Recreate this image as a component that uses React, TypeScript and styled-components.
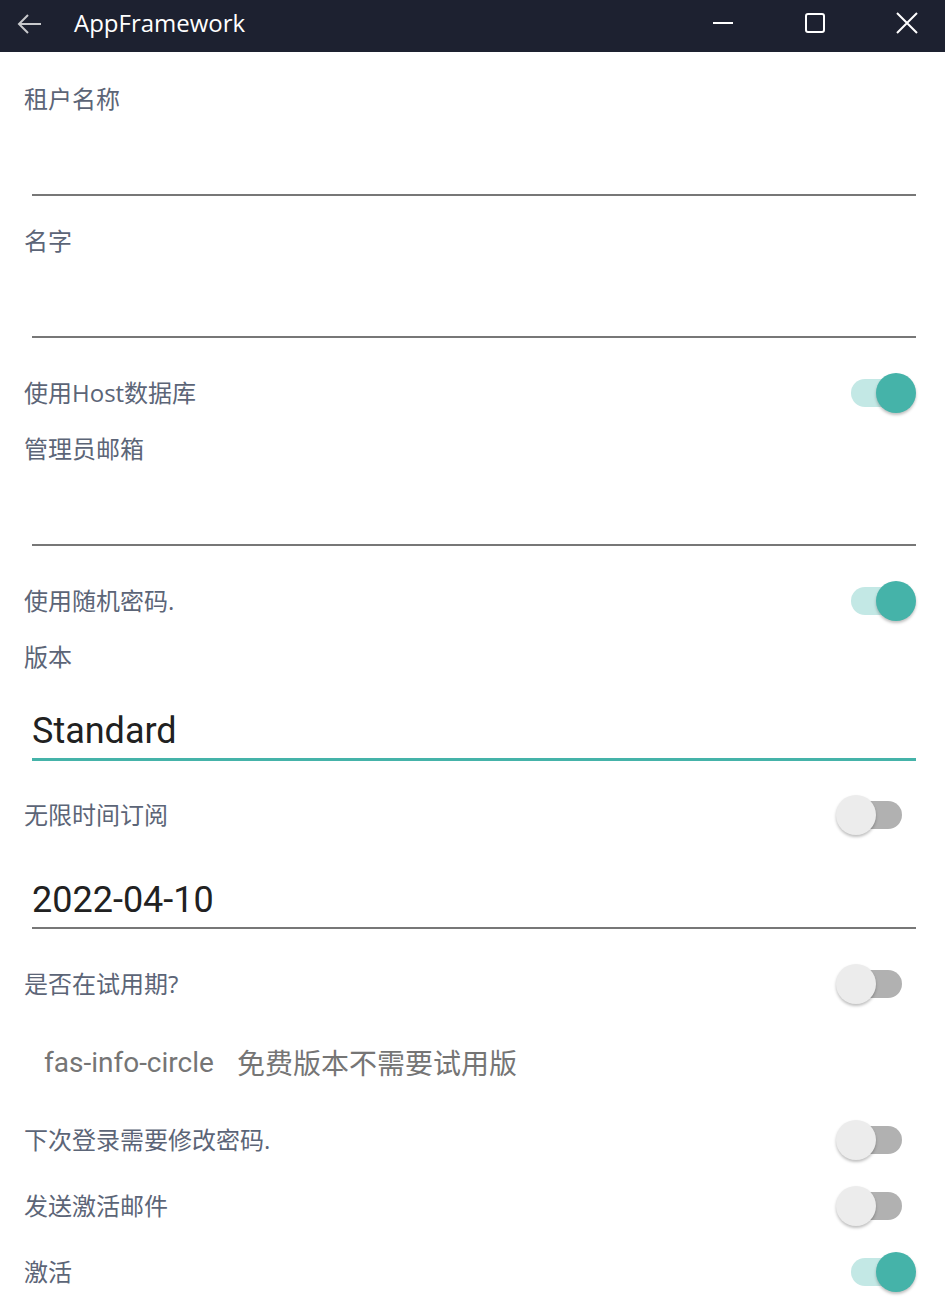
import React from "react";
import styled, { createGlobalStyle } from "styled-components";

const Global = createGlobalStyle`
  html, body { margin: 0; padding: 0; background: #ffffff; }
  body { font-family: "Open Sans", "Noto Sans CJK SC", sans-serif; }
  * { box-sizing: border-box; }
`;

const Window = styled.div`
  width: 945px;
  height: 1302px;
  display: flex;
  flex-direction: column;
  background: #ffffff;
  overflow: hidden;
`;

const TitleBar = styled.div`
  height: 52px;
  flex: none;
  background: #1d2130;
  display: flex;
  align-items: center;
  color: #ffffff;
`;

const BackButton = styled.div`
  width: 60px;
  height: 52px;
  display: flex;
  align-items: center;
  padding-left: 16px;
  margin-top: -4px;
`;

const Title = styled.div`
  font-family: "Open Sans", sans-serif;
  font-size: 24px;
  line-height: 30px;
  margin-left: 14px;
  margin-top: -6px;
  flex: 1;
`;

const Controls = styled.div`
  display: flex;
  align-items: center;
  gap: 70px;
  padding-right: 27px;
  margin-top: -6px;
`;

const ControlButton = styled.div`
  width: 22px;
  height: 22px;
  display: flex;
  align-items: center;
  justify-content: center;
`;

const Form = styled.div`
  display: flex;
  flex-direction: column;
  padding: 0 29px 0 24px;
`;

const Label = styled.div<{ $top: number }>`
  margin-top: ${(p) => p.$top}px;
  height: 32px;
  line-height: 32px;
  font-family: "Open Sans", "Noto Sans CJK SC", sans-serif;
  font-size: 24px;
  color: #5c6577;
  white-space: nowrap;
`;

const Entry = styled.div`
  margin-left: 8px;
  height: 81px;
  border-bottom: 2px solid #777777;
`;

const ValueBox = styled.div<{ $top: number; $focused?: boolean }>`
  margin-top: ${(p) => p.$top}px;
  margin-left: 8px;
  padding-bottom: 5px;
  border-bottom: ${(p) => (p.$focused ? "3px solid #45b3a9" : "2px solid #777777")};
  font-family: Roboto, sans-serif;
  font-size: 36px;
  line-height: 44px;
  color: #212121;
`;

const SwitchRow = styled.div<{ $top: number }>`
  margin-top: ${(p) => p.$top}px;
  height: 40px;
  display: flex;
  align-items: center;
  justify-content: space-between;
`;

const RowLabel = styled.div`
  font-family: "Open Sans", "Noto Sans CJK SC", sans-serif;
  font-size: 24px;
  line-height: 32px;
  color: #5c6577;
  white-space: nowrap;
`;

const SwitchBox = styled.div`
  position: relative;
  width: 80px;
  height: 40px;
  flex: none;
`;

const Track = styled.div<{ $on: boolean }>`
  position: absolute;
  left: 15px;
  top: 6px;
  width: 51px;
  height: 28px;
  border-radius: 14px;
  background: ${(p) => (p.$on ? "#c3e8e5" : "#b1b1b1")};
`;

const Thumb = styled.div<{ $on: boolean }>`
  position: absolute;
  top: 0;
  left: ${(p) => (p.$on ? 40 : 0)}px;
  width: 40px;
  height: 40px;
  border-radius: 50%;
  background: ${(p) => (p.$on ? "#45b3a9" : "#ececec")};
  box-shadow: 0 2px 3px rgba(0, 0, 0, 0.25);
`;

const Info = styled.div`
  margin-top: 38px;
  padding-left: 20px;
  height: 40px;
  display: flex;
  align-items: center;
  color: #757575;
  white-space: nowrap;
`;

const InfoIcon = styled.span`
  font-family: Roboto, sans-serif;
  font-size: 28px;
`;

const InfoText = styled.span`
  font-family: Roboto, "Noto Sans CJK SC", sans-serif;
  font-size: 28px;
  margin-left: 23px;
`;

function Switch({ on }: { on: boolean }) {
  return (
    <SwitchBox>
      <Track $on={on} />
      <Thumb $on={on} />
    </SwitchBox>
  );
}

function ToggleRow({ label, on, top }: { label: string; on: boolean; top: number }) {
  return (
    <SwitchRow $top={top}>
      <RowLabel>{label}</RowLabel>
      <Switch on={on} />
    </SwitchRow>
  );
}

export default function App() {
  return (
    <>
      <Global />
      <Window>
        <TitleBar>
          <BackButton>
            <svg width="26" height="22" viewBox="0 0 26 22" fill="none">
              <path d="M25 11H3M12 2L3 11l9 9" stroke="#c8c9cc" strokeWidth="2" />
            </svg>
          </BackButton>
          <Title>AppFramework</Title>
          <Controls>
            <ControlButton>
              <svg width="22" height="4" viewBox="0 0 22 4">
                <path d="M1 2h20" stroke="#fff" strokeWidth="2" />
              </svg>
            </ControlButton>
            <ControlButton>
              <svg width="20" height="20" viewBox="0 0 20 20" fill="none">
                <rect x="1" y="1" width="18" height="18" rx="2" stroke="#fff" strokeWidth="2" />
              </svg>
            </ControlButton>
            <ControlButton>
              <svg width="22" height="22" viewBox="0 0 22 22" fill="none">
                <path d="M1 1l20 20M21 1L1 21" stroke="#fff" strokeWidth="2" />
              </svg>
            </ControlButton>
          </Controls>
        </TitleBar>
        <Form>
          <Label $top={31}>租户名称</Label>
          <Entry />
          <Label $top={29}>名字</Label>
          <Entry />
          <ToggleRow label="使用Host数据库" on top={35} />
          <Label $top={20}>管理员邮箱</Label>
          <Entry />
          <ToggleRow label="使用随机密码." on top={35} />
          <Label $top={20}>版本</Label>
          <ValueBox $top={36} $focused>Standard</ValueBox>
          <ToggleRow label="无限时间订阅" on={false} top={34} />
          <ValueBox $top={43}>2022-04-10</ValueBox>
          <ToggleRow label="是否在试用期?" on={false} top={35} />
          <Info>
            <InfoIcon>fas-info-circle</InfoIcon>
            <InfoText>免费版本不需要试用版</InfoText>
          </Info>
          <ToggleRow label="下次登录需要修改密码." on={false} top={38} />
          <ToggleRow label="发送激活邮件" on={false} top={26} />
          <ToggleRow label="激活" on top={26} />
        </Form>
      </Window>
    </>
  );
}
